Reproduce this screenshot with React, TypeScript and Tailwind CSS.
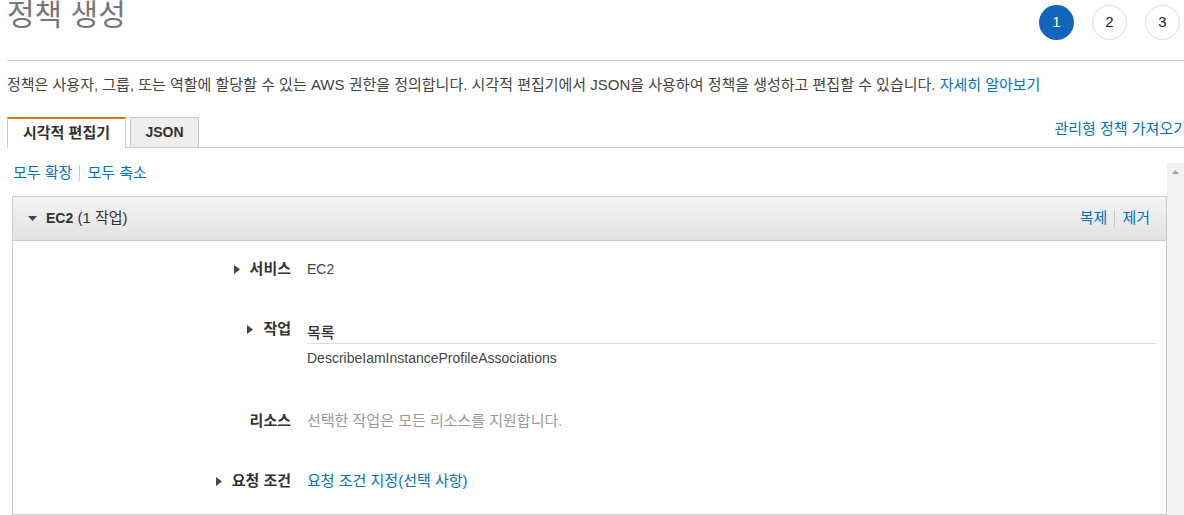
import React from "react";

function RightTri() {
  return (
    <svg width="6" height="9" viewBox="0 0 6 9" className="shrink-0">
      <path d="M0 0 L6 4.5 L0 9 Z" fill="#444" />
    </svg>
  );
}

function DownTri() {
  return (
    <svg width="9" height="5" viewBox="0 0 9 5" className="shrink-0">
      <path d="M0 0 L9 0 L4.5 5 Z" fill="#444" />
    </svg>
  );
}

function Label({ text, arrow }: { text: string; arrow?: boolean }) {
  return (
    <div className="w-[278px] h-[20px] shrink-0 flex items-center justify-end gap-[10px] font-bold text-[#333] leading-[20px]">
      {arrow && <RightTri />}
      <span>{text}</span>
    </div>
  );
}

export default function App() {
  const steps = [1, 2, 3];

  return (
    <div className="w-[1184px] h-[515px] overflow-hidden bg-white text-[15px] text-[#444] font-['Liberation_Sans','Noto_Sans_CJK_KR',sans-serif]">
      <div className="w-[1200px] pl-[7px]">
        {/* ===== HEADER ===== */}
        <div className="flex items-start justify-between h-[61px] border-b border-[#ccc] pr-[20px]">
          <h1 className="text-[30px] leading-none text-[#777] mt-0">정책 생성</h1>
          <div className="flex gap-[18px] mt-[5px]">
            {steps.map((n) =>
              n === 1 ? (
                <div
                  key={n}
                  className="w-[35px] h-[35px] rounded-full bg-[#1166bb] text-white flex items-center justify-center text-[15px]"
                >
                  {n}
                </div>
              ) : (
                <div
                  key={n}
                  className="w-[35px] h-[35px] rounded-full bg-white border border-[#ddd] text-[#222] flex items-center justify-center text-[15px]"
                >
                  {n}
                </div>
              )
            )}
          </div>
        </div>

        {/* ===== DESCRIPTION ===== */}
        <p className="pt-[14px] leading-[20px] whitespace-nowrap">
          정책은 사용자, 그룹, 또는 역할에 할당할 수 있는 AWS 권한을 정의합니다. 시각적 편집기에서 JSON을 사용하여 정책을
          생성하고 편집할 수 있습니다. <span className="text-[#0073bb]">자세히 알아보기</span>
        </p>

        {/* ===== TABS ===== */}
        <div className="w-[1180px] mt-[22px] flex items-end border-b border-[#ccc]">
          <div className="w-[119px] h-[31px] -mb-px bg-white border-x border-[#ccc] border-t-2 border-t-[#e0740f] flex items-center justify-center font-bold text-[#333]">
            시각적 편집기
          </div>
          <div className="ml-[4px] w-[69px] h-[30px] bg-[#eee] border-x border-t border-[#ccc] flex items-center justify-center font-bold text-[14px] text-[#333]">
            JSON
          </div>
          <div className="ml-auto self-start mt-[1px] text-[#0073bb] whitespace-nowrap">관리형 정책 가져오기</div>
        </div>

        {/* ===== SCROLL AREA ===== */}
        <div className="w-[1177px] mt-[15px] flex">
          <div className="flex-1 pl-[5px]">
            <div className="pl-[1px] leading-[20px] flex items-center">
              <span className="text-[#0073bb]">모두 확장</span>
              <span className="mx-[7px] w-px h-[16px] bg-[#ccc]" />
              <span className="text-[#0073bb]">모두 축소</span>
            </div>

            {/* ===== PANEL ===== */}
            <div className="mt-[13px] border border-[#ccc]">
              <div className="h-[44px] border-b border-[#ccc] bg-gradient-to-b from-[#f4f4f4] to-[#e2e2e2] flex items-center justify-between pl-[15px] pr-[16px]">
                <div className="flex items-center gap-[9px] text-[#333]">
                  <DownTri />
                  <span>
                    <b className="text-[14px]">EC2</b> (1 작업)
                  </span>
                </div>
                <div className="flex items-center text-[#0073bb]">
                  <span>복제</span>
                  <span className="mx-[7px] w-px h-[18px] bg-[#ccc]" />
                  <span>제거</span>
                </div>
              </div>

              <div className="pt-[18px] pb-[23px] pr-[10px]">
                <div className="flex items-start">
                  <Label text="서비스" arrow />
                  <div className="pl-[16px] leading-[20px] text-[14px] text-[#444]">EC2</div>
                </div>

                <div className="flex items-start mt-[40px]">
                  <Label text="작업" arrow />
                  <div className="flex-1 pl-[16px]">
                    <div className="pt-[4px] leading-[20px] font-medium text-[#333] border-b border-[#ddd]">목록</div>
                    <div className="pt-[4px] leading-[20px] text-[14px] text-[#444]">DescribeIamInstanceProfileAssociations</div>
                  </div>
                </div>

                <div className="flex items-start mt-[43px]">
                  <Label text="리소스" />
                  <div className="pl-[16px] leading-[20px] text-[#999]">선택한 작업은 모든 리소스를 지원합니다.</div>
                </div>

                <div className="flex items-start mt-[40px]">
                  <Label text="요청 조건" arrow />
                  <div className="pl-[16px] leading-[20px] text-[#0073bb]">요청 조건 지정(선택 사항)</div>
                </div>
              </div>
            </div>
          </div>

          {/* ===== SCROLLBAR ===== */}
          <div className="w-[17px] h-[400px] bg-[#f1f1f1] flex justify-center pt-[7px]">
            <svg width="7" height="4" viewBox="0 0 7 4">
              <path d="M0 4 L3.5 0 L7 4 Z" fill="#a3a3a3" />
            </svg>
          </div>
        </div>
      </div>
    </div>
  );
}
